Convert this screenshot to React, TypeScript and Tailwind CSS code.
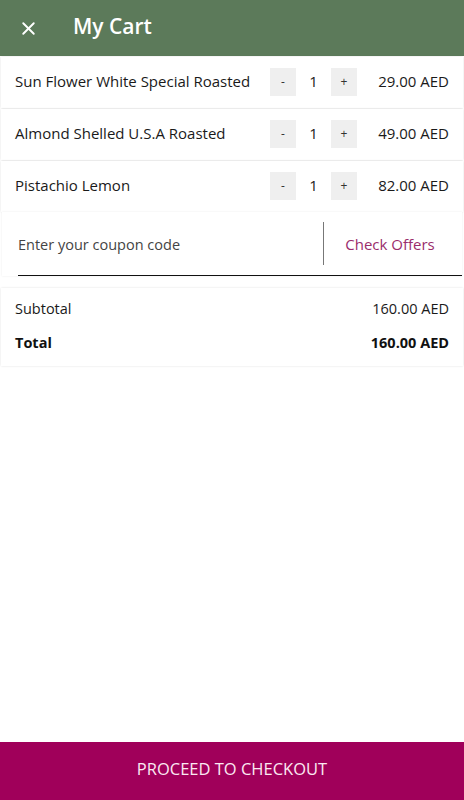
import { X } from "lucide-react";

const items = [
  { name: "Sun Flower White Special Roasted", qty: 1, price: "29.00 AED" },
  { name: "Almond Shelled U.S.A Roasted", qty: 1, price: "49.00 AED" },
  { name: "Pistachio Lemon", qty: 1, price: "82.00 AED" },
];

function CartRow({ name, qty, price }: { name: string; qty: number; price: string }) {
  return (
    <div className="mx-px flex h-[51px] items-center bg-white pb-[2px] pl-[14px] pr-[14px] shadow-[0_0_2px_rgba(0,0,0,0.12)]">
      <span className="flex-1 text-[15px] text-[#1a1a1a]">{name}</span>
      <div className="flex items-center">
        <button className="flex h-[28px] w-[26px] items-center justify-center bg-[#efefef] text-[12px] text-[#333]">-</button>
        <span className="w-[35px] text-center text-[15px] text-[#1a1a1a]">{qty}</span>
        <button className="flex h-[28px] w-[26px] items-center justify-center bg-[#efefef] text-[12px] text-[#333]">+</button>
      </div>
      <span className="w-[92px] text-right text-[15px] text-[#1a1a1a]">{price}</span>
    </div>
  );
}

export default function App() {
  return (
    <div className="flex h-[800px] w-[464px] flex-col bg-white font-['Open_Sans',sans-serif]">
      <header className="flex h-[56px] items-center bg-[#5c7a5a] pl-[18px]">
        <X className="h-[21px] w-[21px] text-white" strokeWidth={2.2} />
        <h1 className="mb-[3px] ml-[34px] text-[21px] font-semibold text-white">My Cart</h1>
      </header>

      <div className="mt-px flex flex-col gap-px">
        {items.map((item) => (
          <CartRow key={item.name} {...item} />
        ))}
      </div>

      <div className="mx-[2px] flex h-[64px] items-stretch bg-white pl-[16px] shadow-[0_0_2px_rgba(0,0,0,0.08)]">
        <div className="flex flex-1 border-b-[1.5px] border-[#111]">
          <input
            className="mt-[2px] flex-1 bg-transparent text-[14.5px] text-[#333] outline-none placeholder:text-[#444]"
            placeholder="Enter your coupon code"
          />
          <div className="my-[10px] w-[1.5px] bg-[#777]" />
          <button className="w-[138px] pr-[6px] pt-[2px] text-[15px] text-[#9a2d6c]">Check Offers</button>
        </div>
      </div>

      <div className="mx-px mt-[12px] flex flex-col gap-[12px] bg-white px-[14px] pt-[10px] pb-[12px] shadow-[0_0_2px_rgba(0,0,0,0.12)]">
        <div className="flex justify-between text-[14.5px] text-[#1a1a1a]">
          <span>Subtotal</span>
          <span>160.00 AED</span>
        </div>
        <div className="flex justify-between text-[14.5px] font-bold text-[#111]">
          <span>Total</span>
          <span>160.00 AED</span>
        </div>
      </div>

      <div className="flex-1" />

      <button className="h-[58px] w-full bg-[#a0005a] pb-[3px] text-[16.5px] text-[#fbe9f2]">PROCEED TO CHECKOUT</button>
    </div>
  );
}
